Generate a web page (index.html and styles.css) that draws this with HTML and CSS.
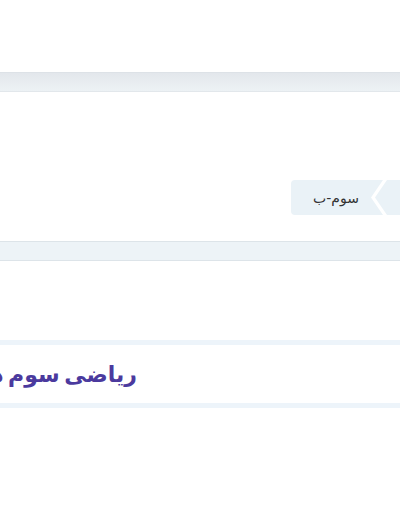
FILE: index.html
```html
<!DOCTYPE html>
<html lang="fa" dir="rtl">
<head>
<meta charset="utf-8">
<link rel="stylesheet" href="styles.css">
</head>
<body>
<div class="page">
  <div class="bar bar-top"></div>
  <nav class="crumbs">
    <span class="crumb crumb-first"></span>
    <span class="crumb crumb-last">سوم-ب</span>
  </nav>
  <div class="bar bar-mid"></div>
  <section class="title-block">
    <h1 class="title">ریاضی سوم دبستان</h1>
  </section>
</div>
</body>
</html>
```
FILE: styles.css
```css
html, body {
  margin: 0;
  padding: 0;
  background: #fff;
  overflow: hidden;
}
body {
  width: 400px;
  height: 516px;
  font-family: "DejaVu Sans", sans-serif;
}
.page {
  display: flex;
  flex-direction: column;
  padding-top: 72px;
}
.bar {
  box-sizing: border-box;
}
.bar-top {
  height: 20px;
  border-top: 1px solid #dde2e7;
  border-bottom: 1px solid #e2e7eb;
  background: linear-gradient(#e3e7ec, #edf2f5);
}
.crumbs {
  display: flex;
  direction: rtl;
  margin-top: 88px;
  height: 35px;
}
.crumb {
  height: 35px;
  background: #eaf2f7;
  display: flex;
  align-items: center;
  justify-content: center;
  font-size: 14px;
  color: #333;
}
.crumb-first {
  width: 25px;
  clip-path: polygon(12px 0, 100% 0, 100% 100%, 12px 100%, 0 50%);
}
.crumb-last {
  width: 92px;
  margin-right: -8px;
  border-radius: 4px 0 0 4px;
  clip-path: polygon(0 0, 100% 0, calc(100% - 12px) 50%, 100% 100%, 0 100%);
  padding-right: 2px;
  box-sizing: border-box;
}
.bar-mid {
  margin-top: 26px;
  height: 20px;
  border-top: 1px solid #dde4e9;
  border-bottom: 1px solid #dde4e9;
  background: #edf3f7;
}
.title-block {
  margin-top: 79px;
  border-top: 5px solid #edf4fa;
  border-bottom: 5px solid #edf4fa;
  height: 58px;
  display: flex;
  align-items: center;
  direction: rtl;
  overflow: hidden;
}
.title {
  margin: 0;
  padding-right: 263px;
  white-space: nowrap;
  font-size: 22px;
  font-weight: bold;
  word-spacing: -3px;
  color: #4b3a9e;
}
```
